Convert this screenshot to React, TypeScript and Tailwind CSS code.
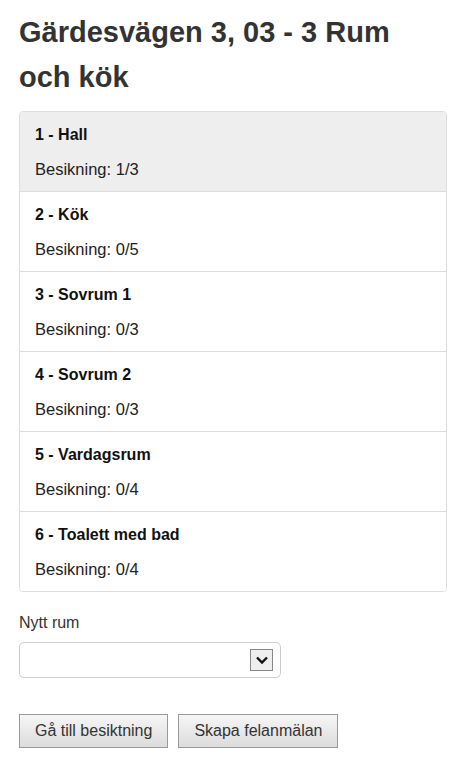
const ROOMS = [
  { name: '1 - Hall', done: '1/3', active: true },
  { name: '2 - Kök', done: '0/5' },
  { name: '3 - Sovrum 1', done: '0/3' },
  { name: '4 - Sovrum 2', done: '0/3' },
  { name: '5 - Vardagsrum', done: '0/4' },
  { name: '6 - Toalett med bad', done: '0/4' },
]

export default function App() {
  return (
    <div className="min-h-screen bg-white pl-[19px] pr-[9px] pt-[10px] text-[#333] font-['Liberation_Sans',Arial,sans-serif]">
      <h1 className="pr-[10px] text-[29px] font-bold leading-[45px] text-[#333]">Gärdesvägen 3, 03 - 3 Rum och kök</h1>

      <div className="mt-[11px] rounded-[4px] border border-[#ddd] overflow-hidden">
        {ROOMS.map((room, idx) => (
          <div key={room.name}
            className={`px-[15px] pt-[6px] pb-[5px] ${idx > 0 ? 'border-t border-[#ddd]' : ''} ${room.active ? 'bg-[#eee]' : 'bg-white'}`}>
            <div className="text-[16px] font-bold leading-[34px] text-[#111]">{room.name}</div>
            <div className="text-[16.5px] leading-[34px] text-[#222]">Besikning: {room.done}</div>
          </div>
        ))}
      </div>

      <div className="mt-[21px] text-[16px] leading-[20px] text-[#333]">Nytt rum</div>
      <div className="mt-[9px] flex h-[36px] w-[262px] items-center justify-end rounded-[5px] border border-[#ccc] bg-white pr-[7px]">
        <div className="flex h-[22px] w-[23px] items-center justify-center border border-[#888] bg-[#eee]">
          <svg width="14" height="10" viewBox="0 0 14 10">
            <path d="M2 2.5 L7 7.5 L12 2.5" fill="none" stroke="#111" strokeWidth="2.4" />
          </svg>
        </div>
      </div>

      <div className="mt-[36px] flex gap-[10px]">
        <button className="h-[34px] border border-[#999] bg-gradient-to-b from-[#f6f6f6] to-[#dcdcdc] px-[15px] text-[16px] text-[#333]">Gå till besiktning</button>
        <button className="h-[34px] border border-[#999] bg-gradient-to-b from-[#f6f6f6] to-[#dcdcdc] px-[15px] text-[16px] text-[#333]">Skapa felanmälan</button>
      </div>
    </div>
  )
}
